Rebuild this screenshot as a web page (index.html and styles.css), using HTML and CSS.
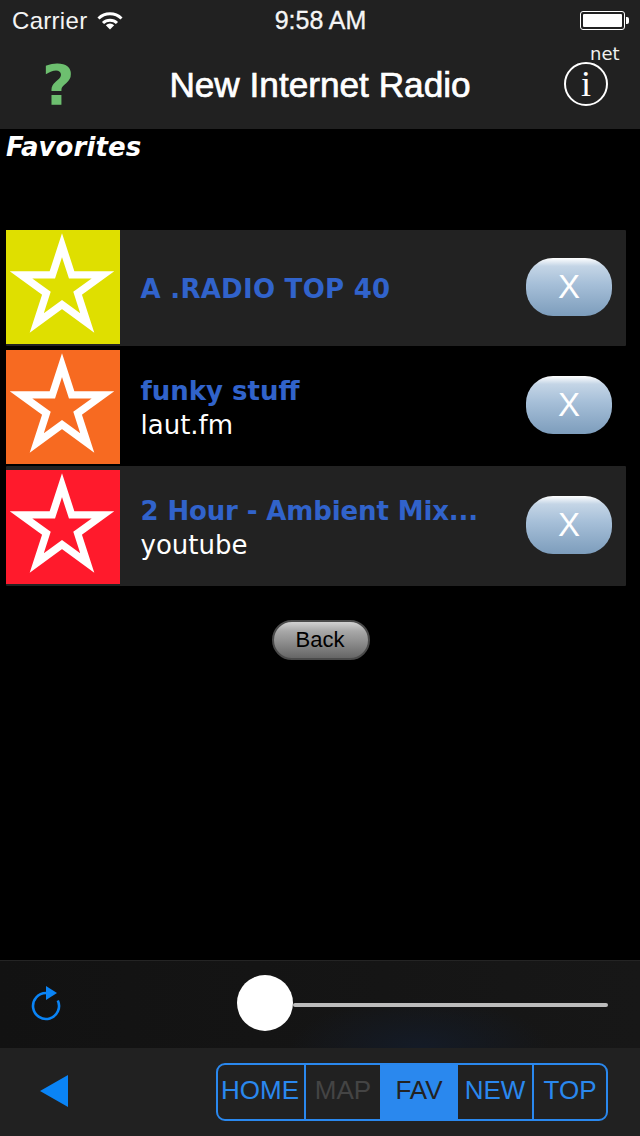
FILE: index.html
```html
<!DOCTYPE html>
<html lang="en">
<head>
<meta charset="utf-8">
<title>New Internet Radio</title>
<link rel="stylesheet" href="styles.css">
</head>
<body>
<svg class="defs" width="0" height="0" aria-hidden="true">
  <symbol id="star" viewBox="0 0 114 114">
    <polygon class="star-line" points="56,15.2 65.66,44.91 96.9,44.91 71.63,63.28 81.27,92.99 56,74.63 30.73,92.99 40.37,63.28 15.1,44.91 46.34,44.91"/>
  </symbol>
</svg>
<div class="app">
  <header class="top">
    <div class="status">
      <div class="status-left">
        <span class="carrier">Carrier</span>
        <svg class="wifi" width="26" height="18" viewBox="0 0 26 18">
          <path class="wifi-arc" d="M1.5 6.5 A16.5 16.5 0 0 1 24.5 6.5"/>
          <path class="wifi-arc" d="M6 11 A10 10 0 0 1 20 11"/>
          <path class="wifi-dot" d="M13 17.5 L8.8 13.2 A6 6 0 0 1 17.2 13.2 Z"/>
        </svg>
      </div>
      <div class="status-time">9:58 AM</div>
      <div class="status-right">
        <div class="battery"><div class="battery-fill"></div></div>
        <div class="battery-nub"></div>
      </div>
    </div>
    <div class="nav">
      <div class="help">?</div>
      <h1 class="title">New Internet Radio</h1>
      <div class="info">
        <span class="info-net">net</span>
        <div class="info-circle"><span>i</span></div>
      </div>
    </div>
  </header>

  <main class="content">
    <h2 class="heading">Favorites</h2>
    <ul class="list">
      <li class="row row-first row-shaded">
        <div class="thumb thumb-yellow"><svg class="star" width="114" height="114"><use href="#star"/></svg></div>
        <div class="text text-first"><div class="name name-first">A .RADIO TOP 40</div></div>
        <button class="remove remove-first">X</button>
      </li>
      <li class="row">
        <div class="thumb thumb-orange"><svg class="star" width="114" height="114"><use href="#star"/></svg></div>
        <div class="text"><div class="name">funky stuff</div><div class="source">laut.fm</div></div>
        <button class="remove">X</button>
      </li>
      <li class="row row-shaded">
        <div class="thumb thumb-red"><svg class="star" width="114" height="114"><use href="#star"/></svg></div>
        <div class="text"><div class="name name-long">2 Hour - Ambient Mix...</div><div class="source">youtube</div></div>
        <button class="remove">X</button>
      </li>
    </ul>
    <div class="back-wrap"><button class="back">Back</button></div>
  </main>

  <section class="player">
    <svg class="reload" width="32" height="36" viewBox="0 0 32 36">
      <path class="reload-arc" d="M16 8 A13 13 0 1 0 27.8 15.5"/>
      <polygon class="reload-head" points="16,1 27,8 16,15"/>
    </svg>
    <div class="slider">
      <div class="thumb-knob"></div>
      <div class="track"></div>
    </div>
  </section>

  <footer class="bottom">
    <svg class="prev" width="28" height="32" viewBox="0 0 28 32"><polygon class="prev-shape" points="0,16 28,0 28,32"/></svg>
    <nav class="segments">
      <span class="seg seg-home">HOME</span>
      <span class="seg seg-map">MAP</span>
      <span class="seg seg-fav">FAV</span>
      <span class="seg seg-new">NEW</span>
      <span class="seg seg-top">TOP</span>
    </nav>
  </footer>
</div>
</body>
</html>
```

FILE: styles.css
```css
* { box-sizing: border-box; }
html, body { margin: 0; padding: 0; background: #000; }
.defs { position: absolute; }
.app {
  width: 640px;
  height: 1136px;
  display: flex;
  flex-direction: column;
  overflow: hidden;
  font-family: "Liberation Sans", Arial, sans-serif;
  color: #fff;
}

/* header */
.top { height: 129px; background: #212121; flex: none; }
.status {
  height: 40px;
  display: grid;
  grid-template-columns: 1fr auto 1fr;
  align-items: center;
  padding: 1px 11px 0 12px;
  font-size: 24px;
  color: #f4f4f4;
}
.status-left { display: flex; align-items: center; gap: 10px; }
.carrier { letter-spacing: 0.3px; }
.wifi-arc { fill: none; stroke: #fff; stroke-width: 3; }
.wifi-dot { fill: #fff; }
.status-time { font-size: 25px; -webkit-text-stroke: 0.3px #fff; }
.status-right { display: flex; justify-content: flex-end; align-items: center; }
.battery {
  width: 45px;
  height: 19px;
  border: 1px solid #fff;
  border-radius: 3px;
  padding: 2px;
}
.battery-fill { height: 100%; background: #fff; border-radius: 1px; }
.battery-nub { width: 3px; height: 7px; background: #fff; border-radius: 0 2px 2px 0; margin-left: 1px; }

.nav {
  height: 89px;
  display: grid;
  grid-template-columns: 100px 1fr 100px;
  align-items: center;
}
.help {
  font-family: "DejaVu Sans", sans-serif;
  font-weight: 700;
  font-size: 56px;
  line-height: 89px;
  color: #6dbf6f;
  padding-left: 42px;
  margin-top: -1px;
}
.title {
  margin: -1px 0 0;
  text-align: center;
  font-size: 35.2px;
  font-weight: 400;
  line-height: 89px;
  -webkit-text-stroke: 0.7px #fff;
}
.info { position: relative; height: 89px; }
.info-circle {
  position: absolute;
  left: 24px;
  top: 22px;
  width: 44px;
  height: 44px;
  border: 2px solid #fff;
  border-radius: 50%;
  display: flex;
  align-items: center;
  justify-content: center;
  font-family: "Liberation Serif", serif;
  font-size: 36px;
  line-height: 40px;
}
.info-net {
  position: absolute;
  left: 50px;
  top: 3px;
  font-family: "DejaVu Sans", sans-serif;
  font-size: 18px;
  line-height: 22px;
  color: #f0f0f0;
}

/* content */
.content { flex: 1; background: #000; padding: 0 14px 0 6px; }
.heading {
  margin: 0;
  height: 101px;
  font-family: "DejaVu Sans", sans-serif;
  font-style: italic;
  font-weight: 700;
  font-size: 26px;
  line-height: 36px;
  letter-spacing: 0.1px;
}
.list { list-style: none; margin: 0; padding: 0; }
.row {
  height: 120px;
  padding: 4px 14px 0 0;
  display: flex;
  align-items: flex-start;
  font-family: "DejaVu Sans", sans-serif;
}
.row-first { height: 116px; padding-top: 0; }
.row-shaded { background: #222; border-radius: 1px; }
.thumb { width: 114px; height: 114px; flex: none; }
.thumb-yellow { background: #dfdf00; }
.thumb-orange { background: #f76a21; }
.thumb-red { background: #ff1a2c; }
.star { display: block; }
.star-line { fill: none; stroke: #fff; stroke-width: 7.4; stroke-miterlimit: 10; }
.text {
  flex: 1;
  min-width: 0;
  align-self: stretch;
  padding: 0 0 0 20.5px;
  display: flex;
  flex-direction: column;
  justify-content: center;
}
.text-first { padding-top: 2px; }
.name {
  font-weight: 700;
  font-size: 26px;
  line-height: 34px;
  color: #3163cb;
  white-space: nowrap;
}
.name-first { font-kerning: none; letter-spacing: 0.28px; }
.name-long { letter-spacing: -0.13px; }
.source { font-size: 26px; line-height: 34px; color: #fff; }
.remove {
  flex: none;
  width: 86px;
  height: 58px;
  margin: 26px 0 0;
  padding: 0;
  border: 0;
  border-radius: 27px;
  background: linear-gradient(#fff 0, #c4d5e6 14%, #a6bfd8 45%, #7d9dbc 100%);
  color: #fff;
  font-family: "Liberation Sans", Arial, sans-serif;
  font-size: 33px;
}
.remove-first { margin-top: 28px; }
.back-wrap { display: flex; justify-content: center; padding: 34px 0 0 10px; }
.back {
  width: 98px;
  height: 40px;
  padding: 0 2px 0 0;
  border: 2px solid #4a4a4a;
  border-radius: 20px;
  background: linear-gradient(#d2d2d2 0, #a8a8a8 25%, #8a8a8a 60%, #666 100%);
  color: #000;
  font-family: "Liberation Sans", Arial, sans-serif;
  font-size: 22px;
}

/* player */
.player {
  height: 88px;
  flex: none;
  border-top: 1px solid #242424;
  background:
    radial-gradient(ellipse 130px 50px at 420px 100%, #141b27, rgba(20, 27, 39, 0)),
    linear-gradient(90deg, #121212, #171717);
  display: flex;
  align-items: center;
  padding: 0 32px 3px 30px;
}
.reload { flex: none; }
.reload-arc { fill: none; stroke: #0a84f6; stroke-width: 2.6; }
.reload-head { fill: #0a84f6; }
.slider { margin-left: 175px; flex: 1; display: flex; align-items: center; }
.thumb-knob { width: 56px; height: 56px; border-radius: 50%; background: #fff; flex: none; }
.track { flex: 1; height: 4px; background: #bcbcbc; border-radius: 2px; margin-top: 4px; }

/* bottom bar */
.bottom {
  height: 88px;
  flex: none;
  background: #212121;
  display: flex;
  align-items: center;
  justify-content: space-between;
  padding: 0 32px 0 40px;
}
.prev { flex: none; margin-top: -2px; }
.prev-shape { fill: #0a84f6; }
.segments {
  width: 392px;
  height: 58px;
  display: flex;
  border: 2px solid #2a88ee;
  border-radius: 9px;
  overflow: hidden;
}
.seg {
  display: flex;
  align-items: center;
  justify-content: center;
  padding-bottom: 3px;
  font-size: 26px;
  color: #2a88ee;
}
.seg-home { width: 88px; border-right: 2px solid #2a88ee; padding-right: 2px; }
.seg-map { width: 74px; color: #444; }
.seg-fav { width: 78px; background: #2a88ee; color: #222; }
.seg-new { width: 76px; border-right: 2px solid #2a88ee; }
.seg-top { flex: 1; }
```
